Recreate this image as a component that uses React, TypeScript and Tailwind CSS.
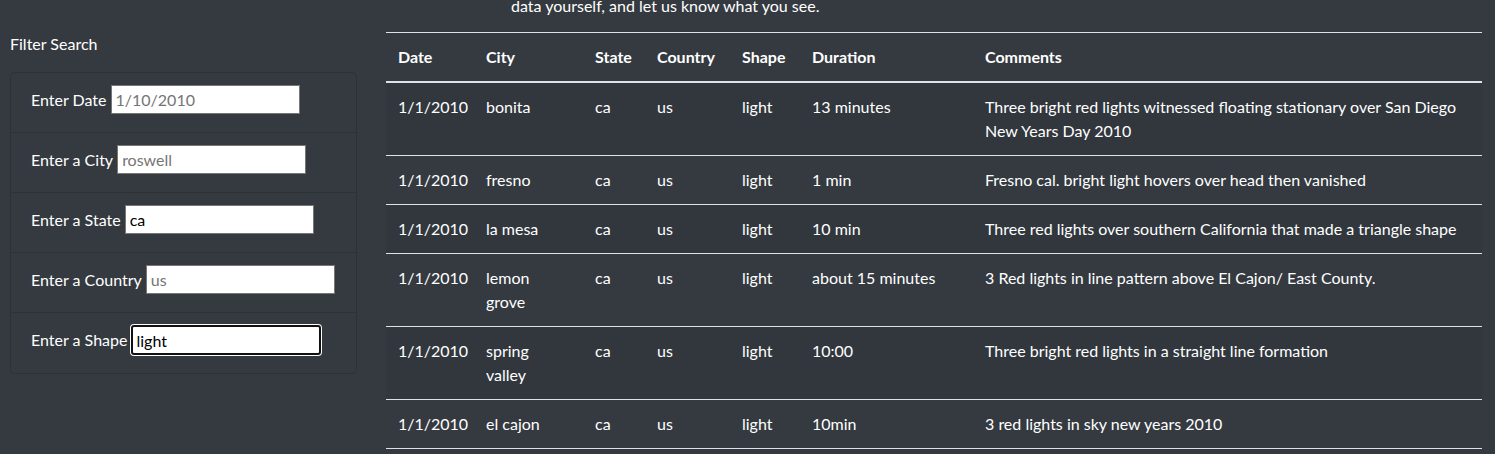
const sightings = [
  { date: '1/1/2010', city: 'bonita', state: 'ca', country: 'us', shape: 'light', duration: '13 minutes', comments: 'Three bright red lights witnessed floating stationary over San Diego New Years Day 2010' },
  { date: '1/1/2010', city: 'fresno', state: 'ca', country: 'us', shape: 'light', duration: '1 min', comments: 'Fresno cal. bright light hovers over head then vanished' },
  { date: '1/1/2010', city: 'la mesa', state: 'ca', country: 'us', shape: 'light', duration: '10 min', comments: 'Three red lights over southern California that made a triangle shape' },
  { date: '1/1/2010', city: 'lemon grove', state: 'ca', country: 'us', shape: 'light', duration: 'about 15 minutes', comments: '3 Red lights in line pattern above El Cajon/ East County.' },
  { date: '1/1/2010', city: 'spring valley', state: 'ca', country: 'us', shape: 'light', duration: '10:00', comments: 'Three bright red lights in a straight line formation' },
  { date: '1/1/2010', city: 'el cajon', state: 'ca', country: 'us', shape: 'light', duration: '10min', comments: '3 red lights in sky new years 2010' },
];

const filters = [
  { id: 'datetime', label: 'Enter Date', placeholder: '1/10/2010', value: '' },
  { id: 'city', label: 'Enter a City', placeholder: 'roswell', value: '' },
  { id: 'state', label: 'Enter a State', placeholder: 'ca', value: 'ca' },
  { id: 'country', label: 'Enter a Country', placeholder: 'us', value: '' },
  { id: 'shape', label: 'Enter a Shape', placeholder: 'light', value: 'light', focused: true },
];

function FilterItem({ f, last }: { f: (typeof filters)[number] & { focused?: boolean }; last: boolean }) {
  return (
    <li className={`flex h-[60px] items-start px-5 pt-[12px] ${last ? '' : 'border-b border-[#2d3237]'}`}>
      <label htmlFor={f.id} className="mr-1 whitespace-nowrap leading-[29px]">
        {f.label}
      </label>
      <input
        id={f.id}
        type="text"
        placeholder={f.placeholder}
        defaultValue={f.value}
        className={
          f.focused
            ? 'h-[30px] w-[190px] rounded-[3px] border-2 border-[#111] bg-white px-[3px] text-black shadow-[0_0_0_1px_#fff] outline-none'
            : 'h-[29px] w-[189px] border border-[#767676] bg-white px-[4px] text-black placeholder:text-[#757575] outline-none'
        }
      />
    </li>
  );
}

export default function App() {
  return (
    <div className="flex min-h-screen overflow-hidden bg-[#343a40] font-['Lato','Noto_Sans',sans-serif] text-base leading-6 text-white">
      <aside className="w-[386px] shrink-0 pl-[10px] pr-[29px] pt-8">
        <h5 className="mb-4 text-[16px]">Filter Search</h5>
        <ul className="rounded border border-[#2d3237]">
          {filters.map((f, i) => (
            <FilterItem key={f.id} f={f} last={i === filters.length - 1} />
          ))}
        </ul>
      </aside>

      <main className="w-[1096px] shrink-0">
        <p className="-mt-[6px] pl-[125px]">data yourself, and let us know what you see.</p>
        <table className="mt-[14px] w-full table-fixed border-collapse text-left">
          <thead>
            <tr>
              <th className="w-[88px] border-t border-b-2 border-[#dee2e6] p-3 align-bottom font-bold">Date</th>
              <th className="w-[109px] border-t border-b-2 border-[#dee2e6] p-3 align-bottom font-bold">City</th>
              <th className="w-[62px] border-t border-b-2 border-[#dee2e6] p-3 align-bottom font-bold">State</th>
              <th className="w-[85px] border-t border-b-2 border-[#dee2e6] p-3 align-bottom font-bold">Country</th>
              <th className="w-[70px] border-t border-b-2 border-[#dee2e6] p-3 align-bottom font-bold">Shape</th>
              <th className="w-[173px] border-t border-b-2 border-[#dee2e6] p-3 align-bottom font-bold">Duration</th>
              <th className="border-t border-b-2 border-[#dee2e6] p-3 align-bottom font-bold">Comments</th>
            </tr>
          </thead>
          <tbody>
            {sightings.map((s, i) => (
              <tr key={i} className={`border-b border-[#dee2e6] ${i % 2 === 0 ? 'bg-[#31373d]' : ''}`}>
                <td className="border-t border-[#dee2e6] p-3 align-top">{s.date}</td>
                <td className="border-t border-[#dee2e6] p-3 align-top">{s.city}</td>
                <td className="border-t border-[#dee2e6] p-3 align-top">{s.state}</td>
                <td className="border-t border-[#dee2e6] p-3 align-top">{s.country}</td>
                <td className="border-t border-[#dee2e6] p-3 align-top">{s.shape}</td>
                <td className="border-t border-[#dee2e6] p-3 align-top">{s.duration}</td>
                <td className="border-t border-[#dee2e6] p-3 align-top">{s.comments}</td>
              </tr>
            ))}
          </tbody>
        </table>
      </main>
    </div>
  );
}
